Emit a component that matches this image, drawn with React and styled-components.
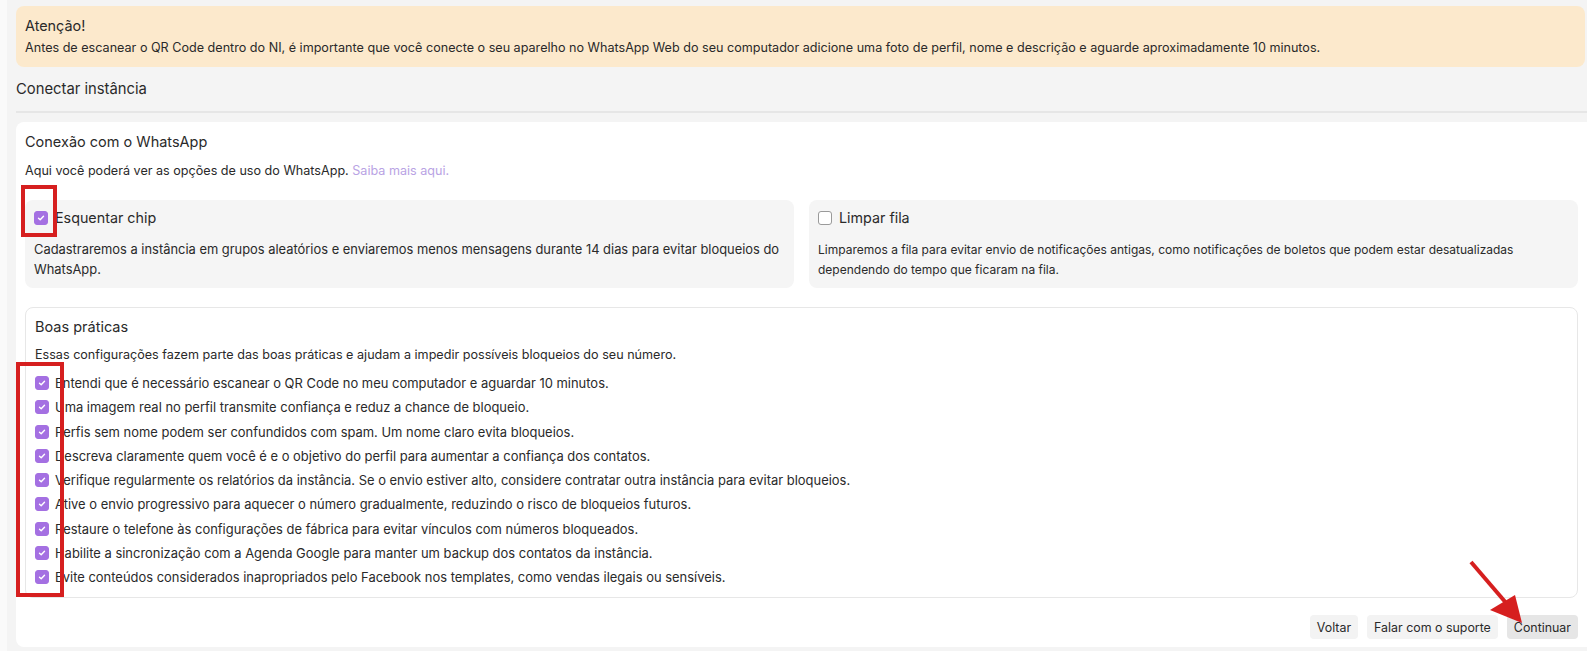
import React from 'react'
import styled, {createGlobalStyle} from 'styled-components'

const colors = {
	text: '#2a2a2a',
	purple: '#a470e2',
	link: '#b9a3e4',
	panel: '#f5f5f5',
	border: '#e7e7e7',
	red: '#d61f1f',
}

const GlobalStyle = createGlobalStyle`
	body {
		margin: 0;
		background: #fafafa;
		font-family: Inter, 'Noto Sans', sans-serif;
		color: ${colors.text};
	}
`

const Page = styled.div`
	position: relative;
	margin-left: 7px;
	min-height: 651px;
	box-sizing: border-box;
	padding: 6px 0 3px 9px;
	background: #f4f4f4;
	overflow: hidden;
`

const Notice = styled.div`
	margin-right: 2px;
	padding: 10px 9px 9px;
	background: #fce9cc;
	border-radius: 8px;
`

const NoticeTitle = styled.div`
	font-size: 14.4px;
	line-height: 20px;
	margin-bottom: 2px;
`

const Text = styled.p`
	margin: 0;
	font-size: ${p => p.$size || 12.6}px;
	line-height: 20px;
`

const Link = styled.a`
	color: ${colors.link};
	text-decoration: none;
`

const Header = styled.h2`
	margin: 12px 0 0;
	padding-bottom: 12px;
	font-size: 14.8px;
	font-weight: 400;
	line-height: 20px;
	border-bottom: 2px solid #e6e6e6;
`

const Card = styled.section`
	margin-top: 9px;
	padding: 10px 9px 8px;
	background: #fff;
	border-radius: 8px 0 0 8px;
`

const Title = styled.h3`
	margin: 0;
	font-size: 14.5px;
	font-weight: 400;
	line-height: 20px;
`

const Options = styled.div`
	display: grid;
	grid-template-columns: 1fr 1fr;
	gap: 15px;
	margin-top: 19px;
`

const Option = styled.div`
	padding: 8px 9px 8px;
	background: ${colors.panel};
	border-radius: 8px;
`

const OptionLabel = styled.label`
	display: flex;
	align-items: center;
	gap: 7px;
	font-size: 14.3px;
	line-height: 20px;
	margin-bottom: 12px;
`

const Box = styled.span`
	display: inline-flex;
	align-items: center;
	justify-content: center;
	flex: none;
	width: 14px;
	height: 14px;
	box-sizing: border-box;
	border-radius: 3px;
	background: ${p => (p.$checked ? colors.purple : '#fff')};
	border: 1px solid ${p => (p.$checked ? colors.purple : '#9a9a9a')};
`

const Practices = styled.div`
	margin-top: 19px;
	padding: 9px 9px 10px;
	border: 1px solid ${colors.border};
	border-radius: 8px;
`

const Checklist = styled.ul`
	list-style: none;
	margin: 8px 0 0;
	padding: 0;
	display: flex;
	flex-direction: column;
	gap: 4.3px;
`

const Item = styled.li`
	display: flex;
	align-items: center;
	gap: 6px;
	font-size: 12.95px;
	line-height: 20px;
`

const Actions = styled.div`
	display: flex;
	justify-content: flex-end;
	gap: 9px;
	margin-top: 17px;
`

const Button = styled.button`
	height: 24px;
	padding: 0 7px;
	border: none;
	border-radius: 4px;
	font-family: inherit;
	font-size: 12.4px;
	color: ${colors.text};
	background: ${p => (p.$primary ? '#e6e6e6' : '#f3f3f3')};
`

const Mark = styled.div`
	position: absolute;
	border: 4px solid ${colors.red};
	box-sizing: border-box;
	pointer-events: none;
`

const Arrow = styled.svg`
	position: absolute;
	left: 1450px;
	top: 554px;
	pointer-events: none;
`

const Check = ({checked}) => (
	<Box $checked={checked}>
		{checked && (
			<svg width="8" height="8" viewBox="0 0 8 8">
				<path d="M1.5 4.2 L3.2 5.8 L6.5 2.2" fill="none" stroke="#fff" strokeWidth="1.4" strokeLinecap="round" strokeLinejoin="round" />
			</svg>
		)}
	</Box>
)

const practices = [
	'Entendi que é necessário escanear o QR Code no meu computador e aguardar 10 minutos.',
	'Uma imagem real no perfil transmite confiança e reduz a chance de bloqueio.',
	'Perfis sem nome podem ser confundidos com spam. Um nome claro evita bloqueios.',
	'Descreva claramente quem você é e o objetivo do perfil para aumentar a confiança dos contatos.',
	'Verifique regularmente os relatórios da instância. Se o envio estiver alto, considere contratar outra instância para evitar bloqueios.',
	'Ative o envio progressivo para aquecer o número gradualmente, reduzindo o risco de bloqueios futuros.',
	'Restaure o telefone às configurações de fábrica para evitar vínculos com números bloqueados.',
	'Habilite a sincronização com a Agenda Google para manter um backup dos contatos da instância.',
	'Evite conteúdos considerados inapropriados pelo Facebook nos templates, como vendas ilegais ou sensíveis.',
]

const App = () => (
	<>
		<GlobalStyle />
		<Page>
			<Notice>
				<NoticeTitle>Atenção!</NoticeTitle>
				<Text>
					Antes de escanear o QR Code dentro do NI, é importante que você conecte o seu aparelho no WhatsApp Web do seu
					computador adicione uma foto de perfil, nome e descrição e aguarde aproximadamente 10 minutos.
				</Text>
			</Notice>

			<Header>Conectar instância</Header>

			<Card>
				<Title>Conexão com o WhatsApp</Title>
				<Text style={{marginTop: 9}}>
					Aqui você poderá ver as opções de uso do WhatsApp. <Link href="#">Saiba mais aqui.</Link>
				</Text>

				<Options>
					<Option>
						<OptionLabel>
							<Check checked />
							Esquentar chip
						</OptionLabel>
						<Text $size={12.9}>
							Cadastraremos a instância em grupos aleatórios e enviaremos menos mensagens durante 14 dias para evitar
							bloqueios do WhatsApp.
						</Text>
					</Option>
					<Option>
						<OptionLabel>
							<Check />
							Limpar fila
						</OptionLabel>
						<Text $size={12}>
							Limparemos a fila para evitar envio de notificações antigas, como notificações de boletos que podem estar
							desatualizadas dependendo do tempo que ficaram na fila.
						</Text>
					</Option>
				</Options>

				<Practices>
					<Title>Boas práticas</Title>
					<Text style={{marginTop: 8}}>
						Essas configurações fazem parte das boas práticas e ajudam a impedir possíveis bloqueios do seu número.
					</Text>
					<Checklist>
						{practices.map(text => (
							<Item key={text}>
								<Check checked />
								{text}
							</Item>
						))}
					</Checklist>
				</Practices>

				<Actions>
					<Button>Voltar</Button>
					<Button>Falar com o suporte</Button>
					<Button $primary>Continuar</Button>
				</Actions>
			</Card>

			<Mark style={{left: 14, top: 185, width: 36, height: 52}} />
			<Mark style={{left: 9, top: 362, width: 48, height: 235}} />
			<Arrow width="72" height="74" viewBox="0 0 72 74">
				<line x1="14" y1="8" x2="50" y2="50" stroke={colors.red} strokeWidth="4" />
				<polygon points="33,56 58,41 65,69" fill={colors.red} />
			</Arrow>
		</Page>
	</>
)

export default App
